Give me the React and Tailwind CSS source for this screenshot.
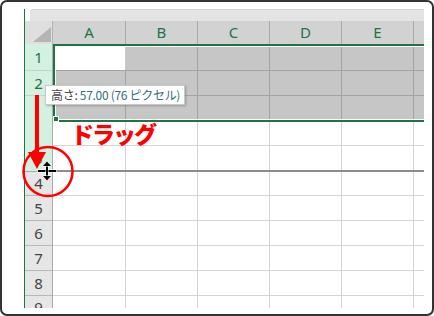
const UI = { fontFamily: '"Noto Sans", "Noto Sans CJK JP", sans-serif' };
const JP = { fontFamily: '"Noto Sans CJK JP", "Noto Sans", sans-serif' };

function ColHead({ label, first }) {
  return (
    <div
      className={
        first
          ? "w-[73px] shrink-0 bg-[#d2d2d2] border-r border-[#ababab] flex items-center justify-center text-[15px] text-[#217346]"
          : "w-[72px] shrink-0 bg-[#d2d2d2] border-r border-[#ababab] flex items-center justify-center text-[15px] text-[#217346]"
      }
    >
      {label}
    </div>
  );
}

function SelRow({ h, first }) {
  const cls =
    h === 24
      ? "flex h-[24px] border-b border-[#a3a3a3]"
      : h === 25
      ? "flex h-[25px] border-b border-[#a3a3a3]"
      : "flex h-[23px]";
  return (
    <div className={cls}>
      <div
        className={
          first
            ? "w-[70px] shrink-0 bg-white border-r border-[#c6c6c6]"
            : "w-[70px] shrink-0 bg-[#c6c6c6] border-r border-[#a3a3a3]"
        }
      />
      <div className="w-[72px] shrink-0 bg-[#c6c6c6] border-r border-[#a3a3a3]" />
      <div className="w-[72px] shrink-0 bg-[#c6c6c6] border-r border-[#a3a3a3]" />
      <div className="w-[72px] shrink-0 bg-[#c6c6c6] border-r border-[#a3a3a3]" />
      <div className="w-[72px] shrink-0 bg-[#c6c6c6] border-r border-[#a3a3a3]" />
      <div className="w-[72px] shrink-0 bg-[#c6c6c6] border-r border-[#a3a3a3]" />
    </div>
  );
}

function Cells() {
  return (
    <>
      <div className="w-[73px] shrink-0 h-full border-r border-[#d4d4d4]" />
      <div className="w-[72px] shrink-0 h-full border-r border-[#d4d4d4]" />
      <div className="w-[72px] shrink-0 h-full border-r border-[#d4d4d4]" />
      <div className="w-[72px] shrink-0 h-full border-r border-[#d4d4d4]" />
      <div className="w-[72px] shrink-0 h-full border-r border-[#d4d4d4]" />
      <div className="w-[72px] shrink-0 h-full border-r border-[#d4d4d4]" />
    </>
  );
}

export default function App() {
  return (
    <div className="relative w-[434px] h-[316px] bg-white overflow-hidden" style={UI}>
      <div className="w-[434px] h-[316px] rounded-[7px] border-2 border-[#333333] pl-[22px] pt-[7px]">
        <div className="w-[400px] h-[299px] border-l border-[#217346] overflow-hidden flex flex-col">
          {/* ribbon band */}
          <div className="h-[12px] ml-[5px] shrink-0 bg-[#e4e4e4] border-t border-[#d2d2d2] rounded-tl-[3px]" />
          {/* column headers */}
          <div className="flex h-[23px] shrink-0">
            <div className="w-[28px] shrink-0 bg-[#dfdfdf] border-r border-[#b4b4b4] flex items-end justify-end pr-[1px] pb-[2px]">
              <svg width="18" height="15" viewBox="0 0 18 15">
                <polygon points="0,15 18,15 18,0" fill="#b4b4b4" />
              </svg>
            </div>
            <ColHead label="A" first />
            <ColHead label="B" />
            <ColHead label="C" />
            <ColHead label="D" />
            <ColHead label="E" />
            <ColHead label="" />
          </div>
          {/* body */}
          <div className="flex flex-1 min-h-0">
            {/* row headers */}
            <div className="w-[28px] shrink-0 flex flex-col border-r border-[#ababab] text-[15px] leading-none">
              <div className="h-[27px] shrink-0 bg-[#d3f0e0] border-b border-[#bcd8c7] flex items-center justify-center text-[#217346]">1</div>
              <div className="h-[25px] shrink-0 bg-[#d3f0e0] border-b border-[#bcd8c7] flex items-center justify-center text-[#217346]">2</div>
              <div className="h-[76px] shrink-0 bg-[#d3f0e0] border-b border-[#a8a8a8] flex items-end justify-center pb-[5px] text-[#7b8f84]">3</div>
              <div className="h-[24px] shrink-0 bg-[#e6e6e6] border-b border-[#b8b8b8] flex items-center justify-center text-[#444444]">4</div>
              <div className="h-[25px] shrink-0 bg-[#e6e6e6] border-b border-[#b8b8b8] flex items-center justify-center text-[#444444]">5</div>
              <div className="h-[25px] shrink-0 bg-[#e6e6e6] border-b border-[#b8b8b8] flex items-center justify-center text-[#444444]">6</div>
              <div className="h-[25px] shrink-0 bg-[#e6e6e6] border-b border-[#b8b8b8] flex items-center justify-center text-[#444444]">7</div>
              <div className="h-[25px] shrink-0 bg-[#e6e6e6] border-b border-[#b8b8b8] flex items-center justify-center text-[#444444]">8</div>
              <div className="flex-1 bg-[#e6e6e6] flex items-start justify-center pt-[4px] text-[#444444]">9</div>
            </div>
            {/* cells */}
            <div className="flex-1 min-w-0 flex flex-col">
              <div className="relative shrink-0 border-y-2 border-l-2 border-[#217346]">
                <div className="border-y border-l border-white">
                  <SelRow h={24} first />
                  <SelRow h={25} />
                  <SelRow h={23} />
                </div>
                <div className="absolute left-[-2px] bottom-[-2px] w-[6px] h-[6px] bg-[#217346] border border-white" />
              </div>
              <div className="flex h-[24px] shrink-0 border-b border-[#d4d4d4]"><Cells /></div>
              <div className="flex h-[26px] shrink-0 border-b-2 border-[#8c8c8c]"><Cells /></div>
              <div className="flex h-[24px] shrink-0 border-b border-[#d4d4d4]"><Cells /></div>
              <div className="flex h-[25px] shrink-0 border-b border-[#d4d4d4]"><Cells /></div>
              <div className="flex h-[25px] shrink-0 border-b border-[#d4d4d4]"><Cells /></div>
              <div className="flex h-[25px] shrink-0 border-b border-[#d4d4d4]"><Cells /></div>
              <div className="flex h-[25px] shrink-0 border-b border-[#d4d4d4]"><Cells /></div>
              <div className="flex flex-1"><Cells /></div>
            </div>
          </div>
        </div>
      </div>

      {/* tooltip */}
      <div
        className="absolute left-[45px] top-[85px] w-[140px] h-[20px] bg-white border border-[#c8c8c8] shadow-[1px_1px_2px_rgba(0,0,0,0.25)] flex items-center pl-[5px] text-[12px] leading-none whitespace-nowrap tracking-[-0.3px]"
        style={JP}
      >
        <span className="text-[#444444]">高さ:</span>
        <span className="text-[#2f6f78]">&nbsp;57.00 (76 ピクセル)</span>
      </div>

      {/* drag label */}
      <div
        className="absolute left-[71px] top-[122px] text-[23px] font-black leading-none text-[#ff0000] tracking-[-2px]"
        style={JP}
      >
        ドラッグ
      </div>

      {/* arrow, circle, cursor */}
      <svg className="absolute left-0 top-0 pointer-events-none" width="434" height="316" viewBox="0 0 434 316">
        <rect x="35" y="95" width="4" height="59" fill="#ff0000" />
        <polygon points="28,152 46,152 37,169" fill="#ff0000" />
        <circle cx="48" cy="171.5" r="24.5" fill="none" stroke="#ff0000" strokeWidth="2.5" />
        <g stroke="#ffffff" strokeWidth="1" paintOrder="stroke">
          <rect x="38" y="170" width="18" height="2" fill="#000000" />
          <rect x="46" y="164" width="2" height="14" fill="#000000" />
          <polygon points="43,166 51,166 47,161.5" fill="#000000" />
          <polygon points="43,176 51,176 47,180.5" fill="#000000" />
        </g>
      </svg>
    </div>
  );
}
